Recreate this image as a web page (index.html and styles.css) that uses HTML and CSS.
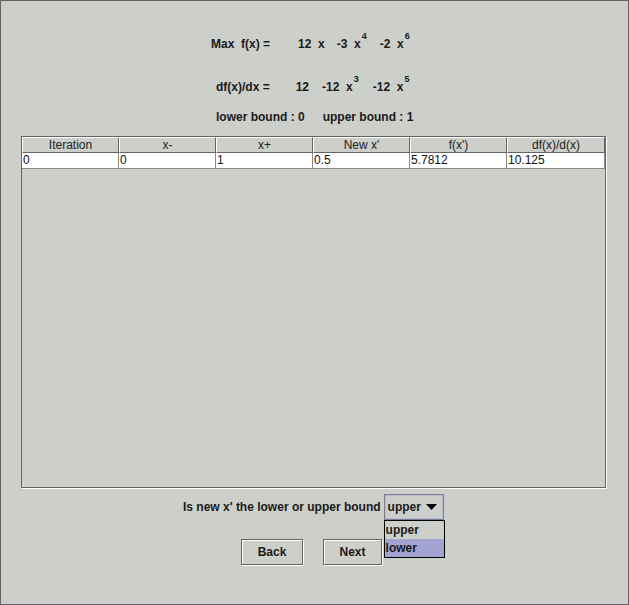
FILE: index.html
```html
<!DOCTYPE html>
<html>
<head>
<meta charset="utf-8">
<link rel="stylesheet" href="styles.css">
</head>
<body>
<div class="frame">
  <div class="eqs">
    <div class="eq eq1">
      <span class="lhs">Max&nbsp; f(x) =</span>
      <span class="t t1">12&nbsp; x</span>
      <span class="t t2">-3&nbsp; x<sup>4</sup></span>
      <span class="t t3">-2&nbsp; x<sup>6</sup></span>
    </div>
    <div class="eq eq2">
      <span class="lhs">df(x)/dx =</span>
      <span class="t d1">12</span>
      <span class="t d2">-12&nbsp; x<sup>3</sup></span>
      <span class="t d3">-12&nbsp; x<sup>5</sup></span>
    </div>
    <div class="eq eq3">
      <span>lower bound : 0</span>
      <span class="ub">upper bound : 1</span>
    </div>
  </div>

  <div class="scroll">
    <div class="thead">
      <div class="th">Iteration</div>
      <div class="th">x-</div>
      <div class="th">x+</div>
      <div class="th">New x'</div>
      <div class="th">f(x')</div>
      <div class="th">df(x)/d(x)</div>
    </div>
    <div class="tr">
      <div class="td">0</div>
      <div class="td">0</div>
      <div class="td">1</div>
      <div class="td">0.5</div>
      <div class="td">5.7812</div>
      <div class="td">10.125</div>
    </div>
  </div>

  <div class="prompt">
    <span class="plabel">Is new x' the lower or upper bound</span>
    <div class="combo">
      <div class="cbox">
        <span class="cval">upper</span>
        <svg class="arrow" width="11" height="6" viewBox="0 0 11 6"><polygon points="0,0 11,0 5.5,6" fill="#000"/></svg>
      </div>
      <div class="popup">
        <div class="opt">upper</div>
        <div class="opt sel">lower</div>
      </div>
    </div>
  </div>

  <div class="buttons">
    <div class="btn back">Back</div>
    <div class="btn next">Next</div>
  </div>
</div>
</body>
</html>
```

FILE: styles.css
```css
* { box-sizing: border-box; }
html, body { margin: 0; padding: 0; }
body {
  background: #cdcfcb;
  font-family: "Liberation Sans", Arial, sans-serif;
  font-size: 12px;
  color: #000;
}
.frame {
  width: 629px;
  height: 605px;
  border: 1px solid #646464;
  background: #cdcfcb;
  position: relative;
}
.eqs {
  display: flex;
  flex-direction: column;
  padding-top: 36px;
  font-weight: bold;
  color: #1a1a1a;
}
.eq {
  display: flex;
  height: 14px;
  line-height: 14px;
  white-space: nowrap;
}
sup {
  font-size: 9px;
  line-height: 0;
  position: relative;
  top: -4px;
  vertical-align: super;
  margin-left: 1px;
}
.eq1 { padding-left: 210px; }
.eq1 .t1 { margin-left: 28px; }
.eq1 .t2 { margin-left: 12px; }
.eq1 .t3 { margin-left: 13px; }
.eq2 { padding-left: 215px; margin-top: 29px; }
.eq2 .d1 { margin-left: 26px; }
.eq2 .d2 { margin-left: 13px; }
.eq2 .d3 { margin-left: 14px; }
.eq3 { padding-left: 215px; margin-top: 16px; }
.eq3 .ub { margin-left: 18px; }

.scroll {
  margin-left: 20px;
  margin-top: 12px;
  width: 585px;
  height: 352px;
  border: 1px solid #646464;
  box-shadow: 1px 1px 0 #ffffff;
  font-weight: normal;
}
.thead, .tr {
  display: grid;
  grid-template-columns: 97px 97px 97px 97px 97px 98px;
}
.th {
  height: 16px;
  line-height: 14px;
  text-align: center;
  border-top: 1px solid #ffffff;
  border-left: 1px solid #ffffff;
  border-right: 1px solid #646464;
  border-bottom: 1px solid #646464;
  color: #222;
}
.tr { background: #fff; }
.td {
  height: 16px;
  line-height: 15px;
  padding-left: 1px;
  border-right: 1px solid #8a8a8a;
  border-bottom: 1px solid #8a8a8a;
  color: #111;
}

.prompt {
  display: flex;
  align-items: center;
  margin-top: 6px;
  padding-left: 182px;
  font-weight: bold;
  color: #1a1a1a;
}
.plabel { margin-right: 3px; }
.combo {
  position: relative;
}
.cbox {
  width: 60px;
  height: 26px;
  border: 1px solid #7d7d8c;
  outline: 1px solid #b8b8d8;
  outline-offset: -2px;
  display: flex;
  align-items: center;
  padding-left: 3px;
  background: #cdcfcb;
}
.cval { flex: 1; }
.arrow { margin-right: 6px; }
.popup {
  position: absolute;
  left: 0;
  top: 26px;
  width: 61px;
  border: 1px solid #000;
  background: #cdcfcb;
}
.opt {
  height: 18px;
  line-height: 18px;
  padding-left: 1px;
}
.opt.sel { background: #a3a3d1; }

.buttons {
  display: flex;
  padding-left: 240px;
  margin-top: 19px;
  font-weight: bold;
  color: #1a1a1a;
}
.btn {
  height: 26px;
  line-height: 24px;
  text-align: center;
  border: 1px solid #646464;
  box-shadow: inset 1px 1px 0 #ffffff, 1px 1px 0 #ffffff;
}
.back { width: 62px; }
.next { width: 59px; margin-left: 20px; }
```
